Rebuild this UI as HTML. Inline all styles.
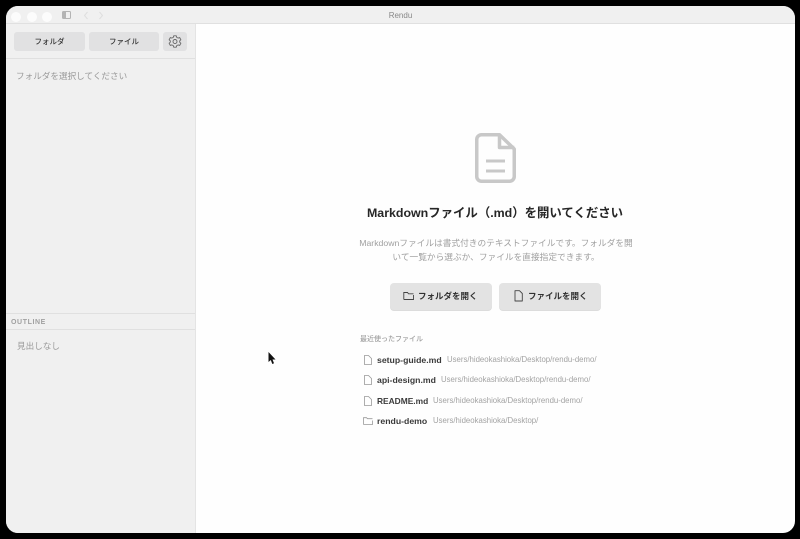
<!DOCTYPE html>
<html lang="ja"><head><meta charset="utf-8"><title>Rendu</title>
<style>
*{box-sizing:border-box;margin:0;padding:0}
html,body{width:800px;height:539px;background:#000;overflow:hidden;font-family:"Liberation Sans","Noto Sans CJK JP",sans-serif}
#win{position:absolute;left:6px;top:6px;width:789px;height:527px;border-radius:12px;background:#fefefe;overflow:hidden}
.a{position:absolute;white-space:nowrap}
.btn{position:absolute;background:#e1e1e2;border-radius:3px;color:#333;font-size:7.5px;font-weight:500;text-align:center;line-height:19px;top:26px;height:19px}
.big{position:absolute;top:277px;height:27px;background:#e3e3e3;border-radius:4px;box-shadow:0 1px 0 #dcdcdc;color:#333;font-size:8.5px;font-weight:700}
.name{font-size:8.7px;font-weight:700;color:#3a3a3a;line-height:12px}
.path{font-size:7.8px;color:#a3a3a3;line-height:12px}
svg{position:absolute;overflow:visible;fill:none}
</style></head><body>
<div id="win">
<div class="a" style="left:0;top:0;width:789px;height:18px;background:#f0f0f0;border-bottom:1px solid #e0e0e0"></div>
<div class="a" style="left:0;top:18px;width:190px;height:509px;background:#f0f0f0;border-right:1px solid #e4e4e4"></div>
<div class="a" style="left:5px;top:6px;width:10px;height:10px;border-radius:50%;background:#fcfcfc"></div>
<div class="a" style="left:21px;top:6px;width:10px;height:10px;border-radius:50%;background:#fcfcfc"></div>
<div class="a" style="left:36px;top:6px;width:10px;height:10px;border-radius:50%;background:#fcfcfc"></div>
<svg style="left:56px;top:5px" width="9" height="8"><rect x=".5" y=".5" width="8" height="7" rx="1" stroke="#b4b4b4"/><rect x="1" y="1" width="3" height="6" fill="#b4b4b4"/></svg>
<svg style="left:77px;top:5px" width="6" height="9"><path d="M4.5 1 1.5 4.500 4.500 8" stroke="#dedede"/></svg>
<svg style="left:92px;top:5px" width="6" height="9"><path d="M1.5 1 4.500 4.500 1.500 8" stroke="#dedede"/></svg>
<div class="a" style="left:0;width:789px;top:5px;text-align:center;font-size:8px;color:#888;line-height:10px">Rendu</div>

<div class="btn" style="left:8px;width:71px">フォルダ</div>
<div class="btn" style="left:83px;width:70px">ファイル</div>
<div class="btn" style="left:157px;width:24px"></div>
<svg style="left:163px;top:29px" width="12" height="13" viewBox="0 0 12 13"><path d="M4.700 .8h2.600l.4 1.600 1.500.7 1.500-.5 1.200 2.200-1.200 1 0 1.400 1.200 1-1.200 2.200-1.500-.5-1.500.7-.4 1.600H4.700l-.4-1.600-1.500-.7-1.500.5L.1 8.200l1.200-1V5.800l-1.200-1 1.200-2.200 1.500.5 1.500-.7z" stroke="#666" stroke-width=".9" stroke-linejoin="round"/><circle cx="6" cy="6.500" r="2" stroke="#666" stroke-width=".9"/></svg>
<div class="a" style="left:0;top:52px;width:189px;height:1px;background:#e0e0e0"></div>
<div class="a" style="left:10px;top:64px;font-size:8.6px;color:#999;line-height:13px">フォルダを選択してください</div>

<div class="a" style="left:0;top:307px;width:189px;height:1px;background:#e0e0e0"></div>
<div class="a" style="left:5px;top:312px;font-size:7px;font-weight:700;letter-spacing:.6px;color:#a0a0a0;line-height:9px">OUTLINE</div>
<div class="a" style="left:0;top:323px;width:189px;height:1px;background:#e0e0e0"></div>
<div class="a" style="left:11px;top:334px;font-size:8.6px;color:#999;line-height:13px">見出しなし</div>

<svg style="left:469px;top:127px" width="41" height="50" viewBox="0 0 41 50"><path d="M6.500 1.750H24.500L39.250 16V43.500a4.750 4.750 0 0 1-4.750 4.750H6.500A4.750 4.750 0 0 1 1.750 43.500V6.500A4.750 4.750 0 0 1 6.500 1.750Z" stroke="#c8c8c8" stroke-width="3.500" stroke-linejoin="round"/><path d="M24.500 1.750V14.500H39.250" stroke="#c8c8c8" stroke-width="3.500" stroke-linejoin="round"/><path d="M11 28H30M11 38H30" stroke="#c8c8c8" stroke-width="3"/></svg>
<div class="a" style="left:289px;width:400px;top:198px;text-align:center;font-size:12.4px;font-weight:700;color:#262626;line-height:18px">Markdownファイル（.md）を開いてください</div>
<div class="a" style="left:340px;width:300px;top:230px;text-align:center;font-size:8.7px;color:#a0a0a0;line-height:14px">Markdownファイルは書式付きのテキストファイルです。フォルダを開<br>いて一覧から選ぶか、ファイルを直接指定できます。</div>

<div class="big" style="left:384px;width:102px"><span class="a" style="left:28px;top:7px;line-height:13px">フォルダを開く</span></div>
<svg style="left:397px;top:285px" width="12" height="10"><path d="M.8 8.500V1.500h3.700l1 1.300H10.500M.8 8.500h9.700V4" stroke="#444" stroke-width=".9"/></svg>
<div class="big" style="left:493px;width:102px"><span class="a" style="left:29px;top:7px;line-height:13px">ファイルを開く</span></div>
<svg style="left:508px;top:284px" width="9" height="12"><path d="M1 .7H5.500L8.300 3.500V11H1Z" stroke="#444" stroke-width=".9" stroke-linejoin="round"/></svg>

<div class="a" style="left:354px;top:329px;font-size:7px;font-weight:500;color:#a0a0a0;line-height:10px">最近使ったファイル</div>

<svg style="left:358px;top:349px" width="8" height="10"><path d="M.5.500H4.500L7.500 3.500V9.500H.5Z" stroke="#999" stroke-width=".8"/></svg>
<div class="a name" style="left:371px;top:348px">setup-guide.md</div>
<div class="a path" style="left:441px;top:348px">Users/hideokashioka/Desktop/rendu-demo/</div>

<svg style="left:358px;top:369px" width="8" height="10"><path d="M.5.500H4.500L7.500 3.500V9.500H.5Z" stroke="#999" stroke-width=".8"/></svg>
<div class="a name" style="left:371px;top:368px">api-design.md</div>
<div class="a path" style="left:435px;top:368px">Users/hideokashioka/Desktop/rendu-demo/</div>

<svg style="left:358px;top:390px" width="8" height="10"><path d="M.5.500H4.500L7.500 3.500V9.500H.5Z" stroke="#999" stroke-width=".8"/></svg>
<div class="a name" style="left:371px;top:388.500px;font-size:8.4px">README.md</div>
<div class="a path" style="left:427px;top:389px">Users/hideokashioka/Desktop/rendu-demo/</div>

<svg style="left:357px;top:411px" width="10" height="8"><path d="M.5 7.500V.7h3l1 1H9.500M.5 7.500h9V3.500" stroke="#999" stroke-width=".8"/></svg>
<div class="a name" style="left:371px;top:409px">rendu-demo</div>
<div class="a path" style="left:427px;top:409px">Users/hideokashioka/Desktop/</div>

<svg style="left:262px;top:346px" width="9" height="13"><path d="M.5 0V10L2.800 8 4.300 12 6 11.300 4.500 7.500H7.500Z" fill="#111"/></svg>
</div>
</body></html>
